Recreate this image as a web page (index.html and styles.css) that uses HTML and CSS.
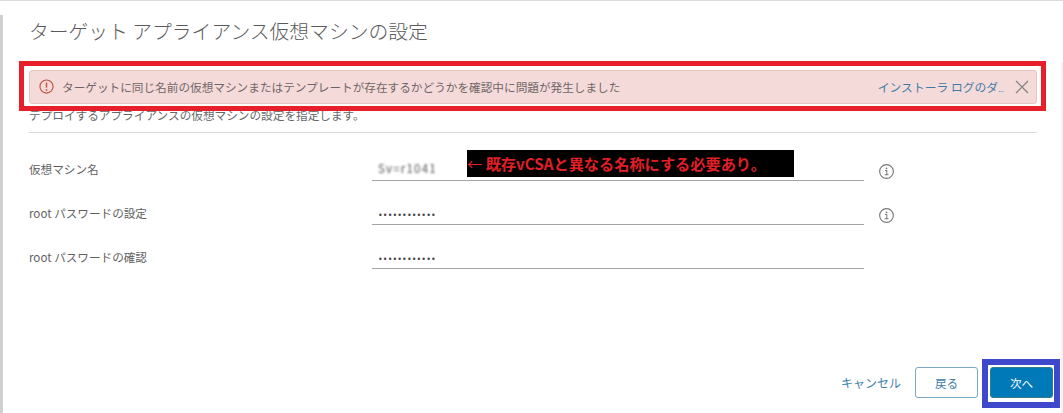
FILE: index.html
```html
<!DOCTYPE html>
<html lang="ja">
<head>
<meta charset="utf-8">
<title>ターゲット アプライアンス仮想マシンの設定</title>
<link rel="stylesheet" href="styles.css">
</head>
<body>
<div class="dialog">
  <h1 class="title">ターゲット アプライアンス仮想マシンの設定</h1>
  <div class="alert">
    <svg class="alert-icon" viewBox="0 0 16 16" aria-hidden="true">
      <circle cx="8" cy="8" r="7" fill="none" stroke="#bd4f3b" stroke-width="1.2"/>
      <path d="M8 3.8v5.4" fill="none" stroke="#bd4f3b" stroke-width="1.5"/>
      <circle cx="8" cy="11.5" r="0.95" fill="#bd4f3b"/>
    </svg>
    <span class="alert-text">ターゲットに同じ名前の仮想マシンまたはテンプレートが存在するかどうかを確認中に問題が発生しました</span>
    <a class="alert-link">インストーラ ログのダ<span class="ellipsis">...</span></a>
    <svg class="alert-close" viewBox="0 0 14 14" aria-hidden="true">
      <path d="M1 1l12 12M13 1L1 13" fill="none" stroke="#808080" stroke-width="1.2"/>
    </svg>
  </div>
  <p class="desc">デプロイするアプライアンスの仮想マシンの設定を指定します。</p>
  <div class="form">
    <div class="row">
      <span class="label">仮想マシン名</span>
      <span class="field"><span class="blurred">Sv=r1041</span></span>
      <svg class="info" viewBox="0 0 16 16" aria-hidden="true">
        <circle cx="8" cy="8" r="7.3" fill="none" stroke="#777" stroke-width="1.2"/>
        <path d="M6.4 7h1.9v4.3M6 11.5h4.2" fill="none" stroke="#777" stroke-width="1.1"/>
        <circle cx="8" cy="4.6" r="1" fill="#777"/>
      </svg>
    </div>
    <div class="row">
      <span class="label">root パスワードの設定</span>
      <span class="field"><span class="dots">••••••••••••</span></span>
      <svg class="info" viewBox="0 0 16 16" aria-hidden="true">
        <circle cx="8" cy="8" r="7.3" fill="none" stroke="#777" stroke-width="1.2"/>
        <path d="M6.4 7h1.9v4.3M6 11.5h4.2" fill="none" stroke="#777" stroke-width="1.1"/>
        <circle cx="8" cy="4.6" r="1" fill="#777"/>
      </svg>
    </div>
    <div class="row">
      <span class="label">root パスワードの確認</span>
      <span class="field"><span class="dots">••••••••••••</span></span>
    </div>
  </div>
  <div class="footer">
    <a class="cancel">キャンセル</a>
    <button class="btn btn-back" type="button">戻る</button>
    <button class="btn btn-next" type="button">次へ</button>
  </div>
</div>
<div class="mark-red"></div>
<div class="mark-blue"></div>
<div class="note"><span class="arrow">←</span> 既存vCSAと異なる名称にする必要あり。</div>
</body>
</html>
```
FILE: styles.css
```css
* { box-sizing: border-box; }
html, body { margin: 0; height: 413px; overflow: hidden; background: #fff; }
body {
  position: relative;
  font-family: "Noto Sans CJK JP", "Noto Sans", sans-serif;
  color: #666;
  border-top: 1px solid #dcdcdc;
}
body::before {
  content: "";
  position: absolute;
  left: 0; top: 14px; bottom: 0;
  width: 3px;
  background: #cfcfcf;
}
body::after {
  content: "";
  position: absolute;
  right: 0; top: 61px; bottom: 0;
  width: 2px;
  background: #f3f3f3;
}
.dialog {
  height: 412px;
  padding: 0 26px 0 29px;
  display: flex;
  flex-direction: column;
}
.title {
  margin: 17px 0 0;
  height: 26px;
  line-height: 26px;
  font-size: 19.8px;
  font-weight: 300;
  color: #5a5a5a;
}
.alert {
  margin-top: 26px;
  height: 34px;
  display: flex;
  align-items: center;
  padding: 0 7px 1px 9px;
  background: #f5dada;
  border: 1px solid #e6c4c2;
  border-radius: 3px;
}
.alert-icon { width: 15px; height: 15px; flex: none; margin-right: 8px; }
.alert-text { font-size: 11.65px; color: #6e6666; white-space: nowrap; flex: 1; }
.alert-link { font-size: 11.8px; color: #3f7aa6; white-space: nowrap; margin-right: 11px; }
.ellipsis { font-size: 7px; }
.alert-close { width: 14px; height: 14px; flex: none; }
.desc {
  margin: 0;
  height: 29px;
  line-height: 22px;
  font-size: 11.65px;
  border-bottom: 1px solid #d8dcde;
  color: #666;
}
.form { display: flex; flex-direction: column; gap: 14px; padding-top: 18px; }
.row { display: flex; align-items: flex-end; height: 30px; }
.label { width: 343px; font-size: 11.6px; line-height: 20px; padding-bottom: 2px; color: #5f5f5f; }
.field {
  width: 492px;
  height: 30px;
  padding: 8px 0 0 6px;
  border-bottom: 1px solid #a4a4a4;
  font-size: 11.5px;
  line-height: 20px;
}
.blurred { filter: blur(0.8px); color: #555; display: inline-block; letter-spacing: 1.2px; transform: translateY(-1px); }
.dots { font-family: "DejaVu Sans", sans-serif; font-size: 8px; letter-spacing: 0.1px; color: #444; }
.info { width: 15px; height: 15px; flex: none; margin: 0 0 2.5px 14.5px; }
.footer {
  margin-top: auto;
  padding: 0 0 15px;
  margin-right: -16px;
  display: flex;
  justify-content: flex-end;
  align-items: center;
}
.cancel { font-size: 12px; color: #3f82ad; margin-right: 14px; }
.btn {
  width: 63px;
  height: 31px;
  padding: 0;
  font-family: inherit;
  font-size: 11.6px;
  border-radius: 3px;
}
.btn-back { background: #fff; color: #3f7aa6; border: 1px solid #79a9c4; }
.btn-next { margin-left: 12px; background: #0079b8; color: #fff; border: 1px solid #2f7d8f; }
.mark-red {
  position: absolute;
  left: 19px; top: 60px;
  width: 1027px; height: 50px;
  border: 5px solid #e71f2b;
}
.mark-blue {
  position: absolute;
  left: 982px; top: 358px;
  width: 78px; height: 49px;
  border: 6px solid #3f48cc;
}
.note {
  position: absolute;
  left: 467px; top: 149px;
  width: 327px; height: 27px;
  line-height: 26px;
  background: #000;
  color: #e01f26;
  font-size: 15.2px;
  font-weight: 700;
  white-space: nowrap;
}
.arrow { font-weight: 400; }
```
